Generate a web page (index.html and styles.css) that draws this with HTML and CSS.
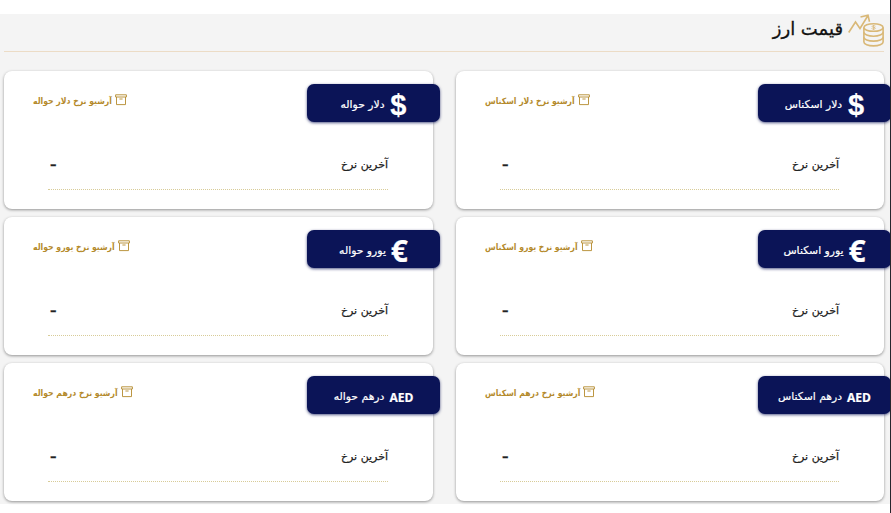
FILE: index.html
```html
<!DOCTYPE html>
<html lang="fa" dir="rtl">
<head>
    <meta charset="UTF-8">
    <meta name="viewport" content="width=device-width, initial-scale=1.0">
    <title>قیمت ارز</title>
    <link rel="stylesheet" href="styles.css">
</head>
<body>
    <svg width="0" height="0" class="defs">
        <symbol id="archive" viewBox="0 0 12 12">
            <path d="M.6 .8h10.8v2.2H.6zM1.5 3v7.6h9V3M4.4 5h3.2" fill="none" stroke="currentColor" stroke-width=".9"/>
        </symbol>
    </svg>

    <div class="section">
        <div class="header">
            <svg class="header-icon" viewBox="0 0 36 33">
                <g fill="none" stroke="#d9b877" stroke-width="1.6">
                    <path d="M.7 18.500L7.500 8l4.500 6.500L20 1.500M12.500 3L20 1.200l1.500 6.500"/>
                    <ellipse cx="25.500" cy="13.500" rx="9.600" ry="3.800"/>
                    <path d="M15.900 13.500v14.500c0 2.200 4.300 3.900 9.600 3.900s9.600-1.700 9.600-3.900V13.500"/>
                    <path d="M15.900 18.300c0 2.200 4.300 3.900 9.600 3.900s9.600-1.700 9.600-3.900M15.900 23.200c0 2.200 4.300 3.900 9.600 3.900s9.600-1.700 9.600-3.900"/>
                    <path d="M27.500 12.200c-1-.8-3.600-.6-3.600.3s3.600.6 3.600 1.700-2.800 1.200-4 .3M25.600 11v5" stroke-width=".8"/>
                </g>
            </svg>
            <h1>قیمت ارز</h1>
        </div>

        <div class="cards">
            <div class="card">
                <div class="card-top">
                    <div class="badge"><b class="sign">$</b><span>دلار اسکناس</span></div>
                    <a class="archive"><svg><use href="#archive"/></svg><span>آرشیو نرخ دلار اسکناس</span></a>
                </div>
                <div class="rate"><span>آخرین نرخ</span><b>–</b></div>
            </div>
            <div class="card">
                <div class="card-top">
                    <div class="badge"><b class="sign">$</b><span>دلار حواله</span></div>
                    <a class="archive"><svg><use href="#archive"/></svg><span>آرشیو نرخ دلار حواله</span></a>
                </div>
                <div class="rate"><span>آخرین نرخ</span><b>–</b></div>
            </div>
            <div class="card">
                <div class="card-top">
                    <div class="badge"><b class="sign euro">€</b><span>یورو اسکناس</span></div>
                    <a class="archive"><svg><use href="#archive"/></svg><span>آرشیو نرخ یورو اسکناس</span></a>
                </div>
                <div class="rate"><span>آخرین نرخ</span><b>–</b></div>
            </div>
            <div class="card">
                <div class="card-top">
                    <div class="badge"><b class="sign euro">€</b><span>یورو حواله</span></div>
                    <a class="archive"><svg><use href="#archive"/></svg><span>آرشیو نرخ یورو حواله</span></a>
                </div>
                <div class="rate"><span>آخرین نرخ</span><b>–</b></div>
            </div>
            <div class="card">
                <div class="card-top">
                    <div class="badge"><b class="code">AED</b><span>درهم اسکناس</span></div>
                    <a class="archive"><svg><use href="#archive"/></svg><span>آرشیو نرخ درهم اسکناس</span></a>
                </div>
                <div class="rate"><span>آخرین نرخ</span><b>–</b></div>
            </div>
            <div class="card">
                <div class="card-top">
                    <div class="badge"><b class="code">AED</b><span>درهم حواله</span></div>
                    <a class="archive"><svg><use href="#archive"/></svg><span>آرشیو نرخ درهم حواله</span></a>
                </div>
                <div class="rate"><span>آخرین نرخ</span><b>–</b></div>
            </div>
        </div>
    </div>
</body>
</html>
```

FILE: styles.css
```css
html, body {
    margin: 0;
    padding: 0;
    overflow: hidden;
    font-family: "DejaVu Sans", sans-serif;
}

body {
    height: 513px;
    box-sizing: border-box;
    padding-top: 14px;
    border-right: 1px solid #25262c;
    background-color: #fff;
}

.defs {
    display: block;
}

.section {
    height: 490px;
    box-sizing: border-box;
    padding: 0 6px 0 4px;
    background-color: #f4f4f4;
}

.header {
    display: flex;
    height: 37px;
    border-bottom: 1px solid #ecdcc6;
}

.header-icon {
    width: 36px;
    height: 33px;
}

h1 {
    margin: 0 5px 0 0;
    font-size: 18px;
    font-weight: normal;
    line-height: 30px;
    color: #111;
    -webkit-text-stroke: 0.3px #111;
}

.cards {
    display: grid;
    grid-template-columns: 428px 429px;
    justify-content: space-between;
    row-gap: 8px;
    margin-top: 19px;
}

.card {
    height: 138px;
    box-sizing: border-box;
    padding-top: 13px;
    border-radius: 8px;
    background-color: #fff;
    box-shadow: 0 1px 3px rgba(0, 0, 0, 0.4);
}

.card-top {
    display: flex;
    justify-content: space-between;
    align-items: flex-start;
}

.badge {
    display: flex;
    align-items: center;
    justify-content: center;
    width: 133px;
    height: 38px;
    margin-right: -7px;
    border-radius: 7px;
    background-color: #0b1457;
    box-shadow: 0 1px 3px rgba(11, 20, 87, 0.7);
    color: #fff;
    font-size: 10.8px;
    white-space: nowrap;
    -webkit-text-stroke: 0.2px #fff;
}

.badge span {
    margin-right: 5px;
    padding-top: 2px;
}

.sign {
    width: 17px;
    font: bold 29px/38px "Liberation Sans", sans-serif;
    padding-top: 3px;
}

.euro {
    font: bold 30px/38px "Open Sans", sans-serif;
    padding-top: 4px;
}

.code {
    font: bold 12px "Open Sans", sans-serif;
    padding-top: 4px;
}

.archive {
    display: flex;
    align-items: center;
    height: 18px;
    margin: 8px 0 0 29px;
    color: #b48a2c;
    font-family: "DejaVu Sans Condensed", "DejaVu Sans", sans-serif;
    font-stretch: condensed;
    font-size: 8.6px;
    font-weight: bold;
    white-space: nowrap;
}

.archive svg {
    width: 12px;
    height: 12px;
    margin-left: 3px;
    margin-bottom: 2px;
}

.rate {
    display: flex;
    justify-content: space-between;
    align-items: center;
    height: 50px;
    margin: 17px 45px 0 44px;
    border-bottom: 1px dotted #d8cc98;
    color: #222;
    font-size: 11px;
    -webkit-text-stroke: 0.25px #222;
}

.rate b {
    margin-left: 2px;
    padding-top: 1px;
    font-size: 13px;
}
```
